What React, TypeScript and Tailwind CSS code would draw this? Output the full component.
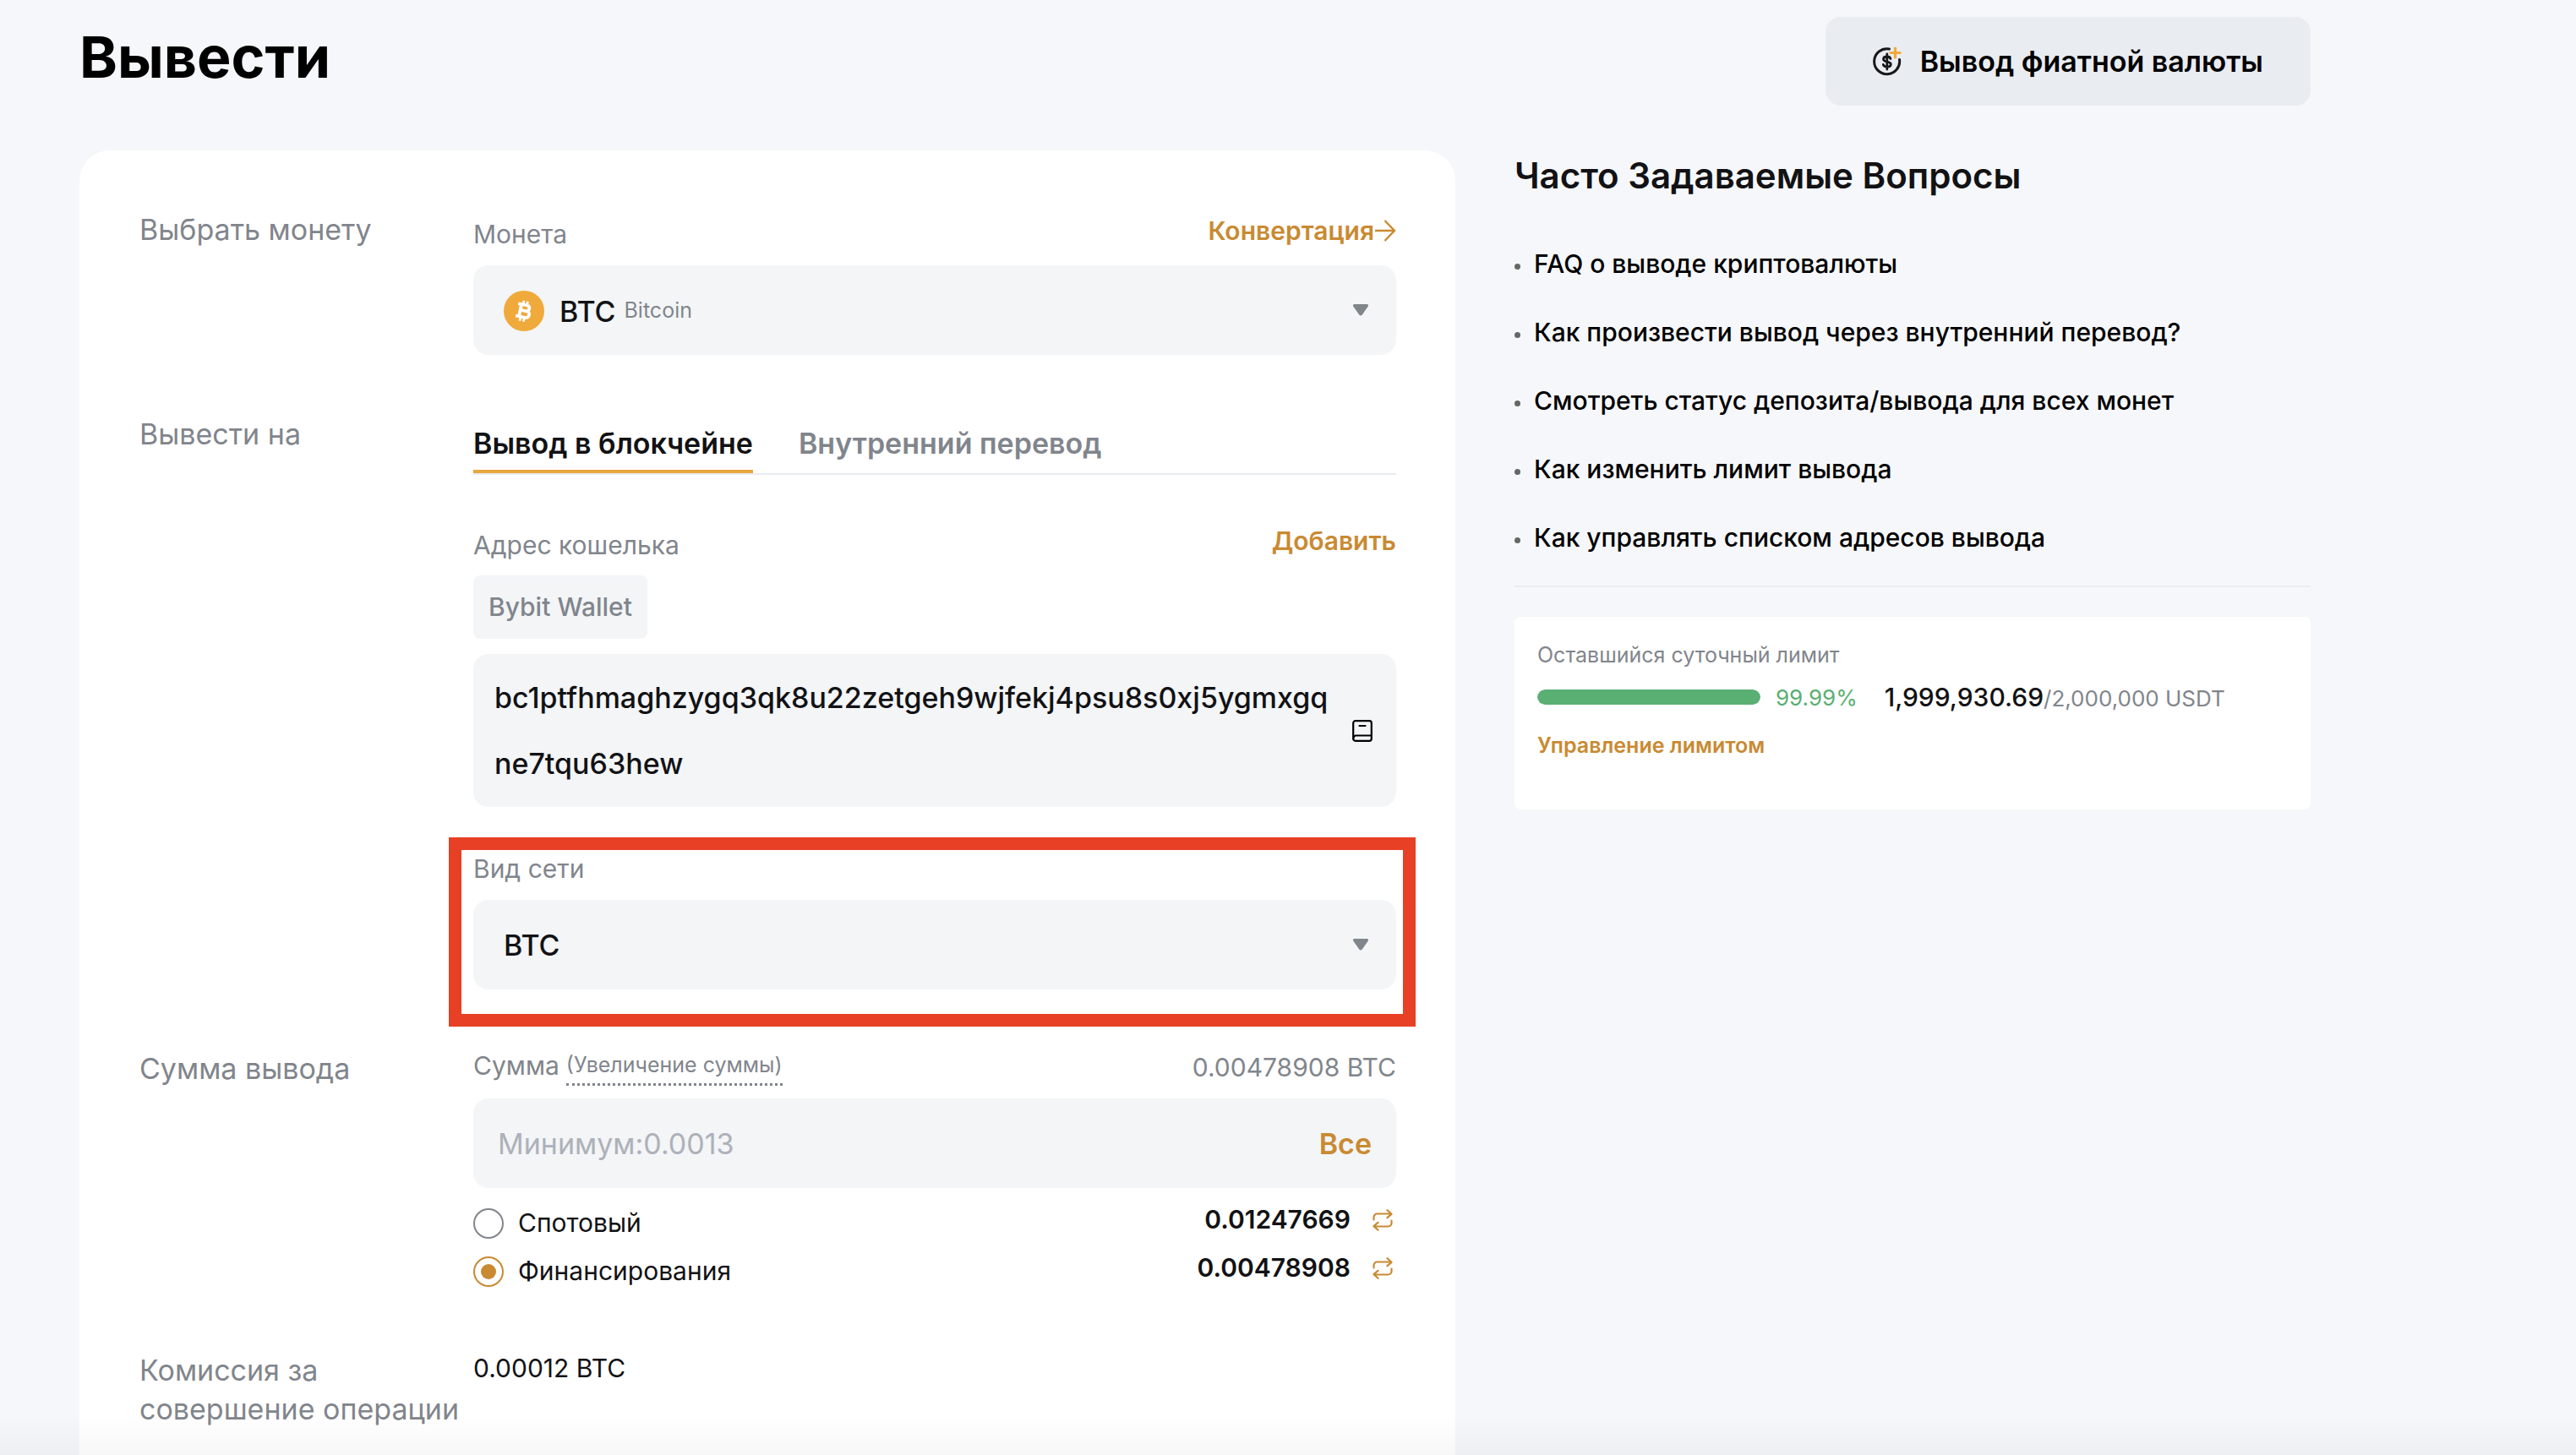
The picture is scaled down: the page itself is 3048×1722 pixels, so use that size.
import React from "react";

const labelText = "text-[34px] leading-[46px] text-[#81858c]";
const fieldBox = "rounded-[18px] bg-[#f3f5f7]";
const linkText = "font-semibold text-[#c98a32]";

function Caret() {
  return (
    <svg width="20" height="16" viewBox="0 0 20 16" className="shrink-0" aria-hidden="true">
      <path d="M2.5 1h15c1.3 0 2 1.4 1.3 2.5l-7 10c-.9 1.3-2.7 1.3-3.6 0l-7-10C.5 2.4 1.2 1 2.5 1z" fill="#81858c" />
    </svg>
  );
}

function ArrowRight() {
  return (
    <svg width="26" height="26" viewBox="0 0 26 26" fill="none" stroke="currentColor" strokeWidth="2.4" aria-hidden="true">
      <path d="M1 13h23M12.5 1L24 13 12.5 25" />
    </svg>
  );
}

function SwapIcon() {
  return (
    <svg width="24" height="26" viewBox="0 0 24 26" fill="none" stroke="currentColor" strokeWidth="2.2" strokeLinecap="round" strokeLinejoin="round" aria-hidden="true">
      <path d="M1.5 12.5V9.500a4 4 0 0 1 4-4H22M17.5 1.200L22.5 5.800l-5 4.400" />
      <path d="M22.5 13.5v3a4 4 0 0 1-4 4H2M6.5 15.800l-5 4.400 5 4.600" />
    </svg>
  );
}

function BookIcon() {
  return (
    <svg width="24" height="26" viewBox="0 0 24 26" fill="none" stroke="#000" strokeWidth="2.2" strokeLinecap="round" aria-hidden="true">
      <rect x="1.2" y="1.2" width="21.6" height="23.6" rx="2.5" />
      <path d="M8.5 7h7M1.5 21.5c0-2 1-3 3-3h18" />
    </svg>
  );
}

function FiatIcon() {
  return (
    <svg width="34" height="36" viewBox="0 0 34 36" fill="none" strokeLinecap="round" aria-hidden="true">
      <path d="M19.5 3A15 15 0 1 0 31.5 15.5" stroke="#17181a" strokeWidth="3" />
      <path d="M21 14.5c-.6-1.700-2.200-2.500-4.200-2.500-2.600 0-4.300 1.200-4.300 3 0 4.200 8.800 2 8.800 6 0 1.900-1.800 3.100-4.500 3.100-2.300 0-4-.9-4.500-2.700M16.800 9v18" stroke="#17181a" strokeWidth="2.8" />
      <path d="M26.5 2v11M21 7.500h11" stroke="#f0a93b" strokeWidth="3.2" />
    </svg>
  );
}

function BitcoinIcon() {
  return (
    <svg width="48" height="48" viewBox="0 0 48 48" className="shrink-0" aria-hidden="true">
      <circle cx="24" cy="24" r="24" fill="#f0a93b" />
      <g transform="rotate(12 24 24)" fill="none" stroke="#fff" strokeWidth="3.6">
        <path d="M15.5 16.800h10c2.600 0 4.200 1.300 4.200 3.400s-1.600 3.500-4.200 3.500H20h6.300c2.900 0 4.700 1.500 4.700 3.900s-1.800 3.900-4.700 3.900H15.5" />
        <path d="M19.5 16v16" strokeWidth="3.8" />
        <path d="M21.5 12v4.500M26 12v4.500M21.5 31.500v5M26 31.500v5" strokeWidth="2.8" />
      </g>
    </svg>
  );
}

function Row({ label, className = "", children }: { label: string; className?: string; children: React.ReactNode }) {
  return (
    <section className={"flex " + className}>
      <h2 className={"w-[395px] shrink-0 pt-[11px] " + labelText}>{label}</h2>
      <div className="min-w-0 flex-1">{children}</div>
    </section>
  );
}

const questions = [
  "FAQ о выводе криптовалюты",
  "Как произвести вывод через внутренний перевод?",
  "Смотреть статус депозита/вывода для всех монет",
  "Как изменить лимит вывода",
  "Как управлять списком адресов вывода",
];

const accounts = [
  { id: "spot", name: "Спотовый", amount: "0.01247669" },
  { id: "funding", name: "Финансирования", amount: "0.00478908" },
];

export default function App() {
  return (
    <div className="flex min-h-screen flex-col bg-[#f6f7fb] pl-[94px] pr-[314px] font-['Inter',sans-serif] text-[#121214]">
      <header className="flex items-start justify-between pt-5">
        <h1 className="text-[68px] font-bold leading-[94px] text-black">Вывести</h1>
        <button className="flex h-[105px] items-center gap-[22px] rounded-[18px] bg-[#e9ecf1] px-[56px] text-[34px] font-semibold text-black">
          <FiatIcon />
          Вывод фиатной валюты
        </button>
      </header>

      <div className="mt-[53px] grid flex-1 grid-cols-[1628fr_942fr] gap-[70px]">
        <main className="rounded-t-[36px] bg-white pl-[71px] pr-[70px] pt-[60px]">
          <Row label="Выбрать монету">
            <div className="flex h-[76px] items-start justify-between text-[30px]">
              <label htmlFor="coin" className="leading-[78px] text-[#81858c]">Монета</label>
              <a href="#convert" className={"flex items-center leading-[70px] " + linkText}>
                Конвертация
                <ArrowRight />
              </a>
            </div>
            <div className={"relative flex h-[106px] items-center pl-[36px] pr-[32px] " + fieldBox}>
              <div className="flex flex-1 items-center pt-0.5">
                <BitcoinIcon />
                <span className="ml-[18px] text-[34px] font-medium">BTC</span>
                <span className="ml-2.5 text-[25px] text-[#81858c]">Bitcoin</span>
              </div>
              <Caret />
              <select id="coin" className="absolute inset-0 h-full w-full cursor-pointer appearance-none opacity-0">
                <option>BTC</option>
              </select>
            </div>
          </Row>

          <Row label="Вывести на" className="mt-[60px]">
            <div role="tablist" className="flex gap-[54px] border-b-2 border-[#e9ecf0] pt-[14px] text-[34px] font-semibold">
              <button role="tab" aria-selected="true" className="border-b-4 border-[#e8a63c] leading-[62px]">Вывод в блокчейне</button>
              <button role="tab" aria-selected="false" className="border-b-4 border-transparent leading-[62px] text-[#81858c]">Внутренний перевод</button>
            </div>

            <div className="mt-[45px] flex h-[74px] items-start justify-between text-[30px]">
              <label htmlFor="address" className="leading-[76px] text-[#81858c]">Адрес кошелька</label>
              <a href="#add" className={"leading-[66px] " + linkText}>Добавить</a>
            </div>
            <button className="block h-[75px] rounded-lg bg-[#f3f5f7] px-[18px] text-[30px] font-medium text-[#81858c]">Bybit Wallet</button>
            <div className={"mt-[18px] flex items-center pb-[12px] pl-[25px] pr-[28px] pt-[13px] " + fieldBox}>
              <textarea
                id="address"
                rows={2}
                readOnly
                defaultValue="bc1ptfhmaghzygq3qk8u22zetgeh9wjfekj4psu8s0xj5ygmxgqne7tqu63hew"
                className="block min-w-0 flex-1 resize-none overflow-hidden break-all bg-transparent text-[34px] font-medium leading-[78px] outline-none"
              />
              <button aria-label="Адресная книга" className="ml-[22px]">
                <BookIcon />
              </button>
            </div>

            <div className="relative mt-[36px]">
              <label htmlFor="network" className="block text-[30px] leading-[74px] text-[#81858c]">Вид сети</label>
              <div className={"flex h-[106px] items-center pr-[32px] " + fieldBox}>
                <select id="network" className="h-full flex-1 appearance-none bg-transparent pl-[36px] text-[34px] font-medium outline-none">
                  <option>BTC</option>
                </select>
                <Caret />
              </div>
              <div className="pointer-events-none absolute -bottom-[44px] -left-[29px] -right-[23px] top-0 border-[15px] border-[#e84025]" />
            </div>
          </Row>

          <Row label="Сумма вывода" className="mt-[60px]">
            <div className="flex h-[69px] items-start justify-between text-[30px] text-[#81858c]">
              <div className="flex items-center">
                <label htmlFor="amount" className="leading-[60px]">Сумма</label>
                <button className="ml-2 border-b-3 border-dotted border-[#81858c] text-[25px] leading-[44px]">(Увеличение суммы)</button>
              </div>
              <span className="leading-[64px]">0.00478908 BTC</span>
            </div>
            <div className={"flex h-[106px] items-center px-[29px] text-[34px] " + fieldBox}>
              <input id="amount" type="text" placeholder="Минимум:0.0013" className="h-full min-w-0 flex-1 bg-transparent outline-none placeholder:text-[#adb1b8]" />
              <button className={linkText}>Все</button>
            </div>
            <div className="mt-[13px] text-[30px]">
              {accounts.map((a) => (
                <div key={a.id} className="flex h-[57px] items-start justify-between">
                  <label className="flex h-full cursor-pointer items-center gap-[17px]">
                    <input
                      type="radio"
                      name="account"
                      defaultChecked={a.id === "funding"}
                      className="flex size-9 appearance-none items-center justify-center rounded-full border-2 border-[#81858c] checked:border-[#c98a32] checked:before:size-[18px] checked:before:rounded-full checked:before:bg-[#c98a32] checked:before:content-['']"
                    />
                    {a.name}
                  </label>
                  <div className="flex h-[49px] items-center gap-[26px] pr-1 font-semibold">
                    {a.amount}
                    <button aria-label={"Перевести: " + a.name} className="text-[#c98a32]">
                      <SwapIcon />
                    </button>
                  </div>
                </div>
              ))}
            </div>
          </Row>

          <Row label="Комиссия за совершение операции" className="mt-[55px]">
            <p className="text-[30px] leading-[62px]">0.00012 BTC</p>
          </Row>
        </main>

        <aside>
          <h2 className="text-[42px] font-semibold leading-[60px]">Часто Задаваемые Вопросы</h2>
          <ul className="mt-[34px] text-[30px] font-medium text-black">
            {questions.map((q) => (
              <li key={q} className="flex h-[81px] items-center gap-4">
                <span className="mt-1.5 size-[7px] rounded-full bg-[#666]" />
                <a href="#faq">{q}</a>
              </li>
            ))}
          </ul>
          <div className="mt-4 border-t-2 border-[#e9ecf0]" />
          <section className="mt-[35px] rounded-lg bg-white px-[27px] pb-[46px] pt-[22px] text-[25px]">
            <h3 className="leading-[46px] text-[#81858c]">Оставшийся суточный лимит</h3>
            <div className="flex h-[54px] items-center">
              <div role="progressbar" aria-valuenow={99.99} aria-label="Оставшийся суточный лимит" className="h-[18px] w-[264px] overflow-hidden rounded-full bg-[#e9ecf0]">
                <div className="h-full rounded-full bg-[#5aaf73]" style={{ width: "99.99%" }} />
              </div>
              <span className="ml-[18px] text-[26px] text-[#5aaf73]">99.99%</span>
              <p className="ml-[32px] text-[26px] text-[#81858c]">
                <span className="text-[30px] font-medium text-[#121214]">1,999,930.69</span>/2,000,000 USDT
              </p>
            </div>
            <a href="#limit" className={"block leading-[60px] " + linkText}>Управление лимитом</a>
          </section>
        </aside>
      </div>
      <div className="pointer-events-none fixed inset-x-0 bottom-0 h-12 bg-linear-to-t from-black/3 to-transparent" />
    </div>
  );
}
